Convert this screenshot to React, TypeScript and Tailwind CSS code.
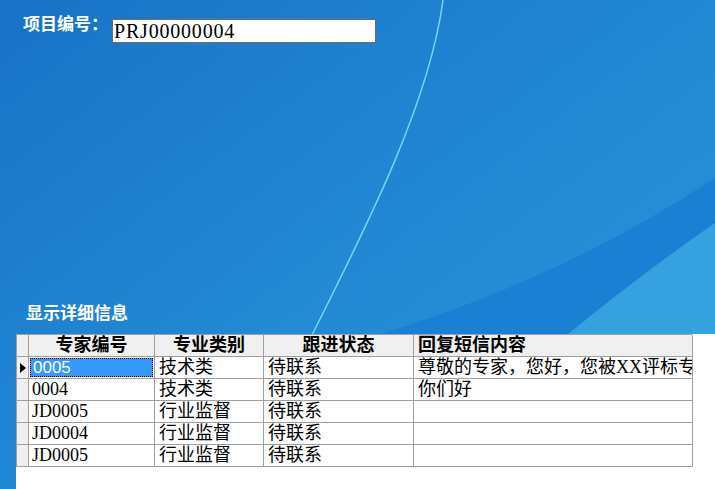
import React from "react";

const serif = "font-['Liberation_Serif','Noto_Sans_CJK_SC',serif]";

type Row = { id: string; cat: string; status: string; msg: string };

const rows: Row[] = [
  { id: "0005", cat: "技术类", status: "待联系", msg: "尊敬的专家，您好，您被XX评标专" },
  { id: "0004", cat: "技术类", status: "待联系", msg: "你们好" },
  { id: "JD0005", cat: "行业监督", status: "待联系", msg: "" },
  { id: "JD0004", cat: "行业监督", status: "待联系", msg: "" },
  { id: "JD0005", cat: "行业监督", status: "待联系", msg: "" },
];

function Background() {
  return (
    <svg className="absolute inset-0" width="715" height="489" viewBox="0 0 715 489">
      <defs>
        <linearGradient id="bg" x1="0" y1="0" x2="1" y2="0.9">
          <stop offset="0" stopColor="#1872c6" />
          <stop offset="0.55" stopColor="#238ad4" />
          <stop offset="1" stopColor="#2e9bdb" />
        </linearGradient>
      </defs>
      <rect width="715" height="489" fill="url(#bg)" />
      <path d="M443 0 C430 100 370 220 312 335 L300 360 L715 360 L715 0 Z" fill="#1a7fd0" opacity="0.18" />
      <path d="M377 335 Q560 280 715 178 L715 223 Q640 275 567 335 Z" fill="#1a80d3" />
      <path d="M567 335 Q640 275 715 223 L715 340 L560 340 Z" fill="#35a2df" />
      <path d="M443 0 C430 100 370 220 312 335" fill="none" stroke="#7ad3f5" strokeWidth="1.5" />
    </svg>
  );
}

const cols = "grid grid-cols-[12px_126px_109px_150px_279px]";
const cell = "border-r border-b border-[#a0a0a0] h-[22px] leading-[21px] overflow-hidden whitespace-nowrap";

export default function App() {
  return (
    <div className="relative w-[715px] h-[489px] overflow-hidden bg-[#1f80cf]">
      <Background />
      <div className="relative flex flex-col">
        <div className="flex items-start pl-[23px] h-[43px]">
          <div className="mt-[13px] text-[17px] leading-[20px] font-bold text-white font-['Noto_Sans_CJK_SC',sans-serif] w-[89px] whitespace-nowrap">
            项目编号：
          </div>
          <div
            className={`mt-[19px] w-[264px] h-[24px] bg-white border border-[#6e6e6e] pl-[1px] text-[20px] leading-[22px] tracking-[0.8px] text-black ${serif}`}
          >
            PRJ00000004
          </div>
        </div>
        <div className="mt-[259px] pl-[26px] text-[17px] leading-[20px] font-bold text-white font-['Noto_Sans_CJK_SC',sans-serif]">
          显示详细信息
        </div>
        <div className="mt-[12px] ml-[16px] h-[155px] bg-white">
          <div className={`${cols} w-[676px] border-l border-t border-[#a0a0a0] ${serif} text-[18px] text-black`}>
            <div className={`${cell} bg-[#f0f0f0]`} />
            <div className={`${cell} bg-[#f0f0f0] text-center font-bold`}>专家编号</div>
            <div className={`${cell} bg-[#f0f0f0] text-center font-bold`}>专业类别</div>
            <div className={`${cell} bg-[#f0f0f0] text-center font-bold`}>跟进状态</div>
            <div className={`${cell} bg-[#f0f0f0] pl-[4px] font-bold`}>回复短信内容</div>
            {rows.map((r, i) => (
              <React.Fragment key={i}>
                <div className={`${cell} bg-[#f0f0f0] flex items-center justify-center`}>
                  {i === 0 && (
                    <svg width="6" height="10" viewBox="0 0 6 10">
                      <polygon points="0,0 6,5 0,10" fill="#000" />
                    </svg>
                  )}
                </div>
                {i === 0 ? (
                  <div className={`${cell} bg-white p-px`}>
                    <div className="h-full bg-[#3399ff] outline outline-1 outline-dotted outline-black -outline-offset-1 text-white pl-[3px] text-[17px] leading-[20px] font-['Liberation_Sans',sans-serif]">
                      {r.id}
                    </div>
                  </div>
                ) : (
                  <div className={`${cell} pl-[3px]`}>{r.id}</div>
                )}
                <div className={`${cell} pl-[4px]`}>{r.cat}</div>
                <div className={`${cell} pl-[4px]`}>{r.status}</div>
                <div className={`${cell} pl-[4px]`}>{r.msg}</div>
              </React.Fragment>
            ))}
          </div>
        </div>
      </div>
    </div>
  );
}
